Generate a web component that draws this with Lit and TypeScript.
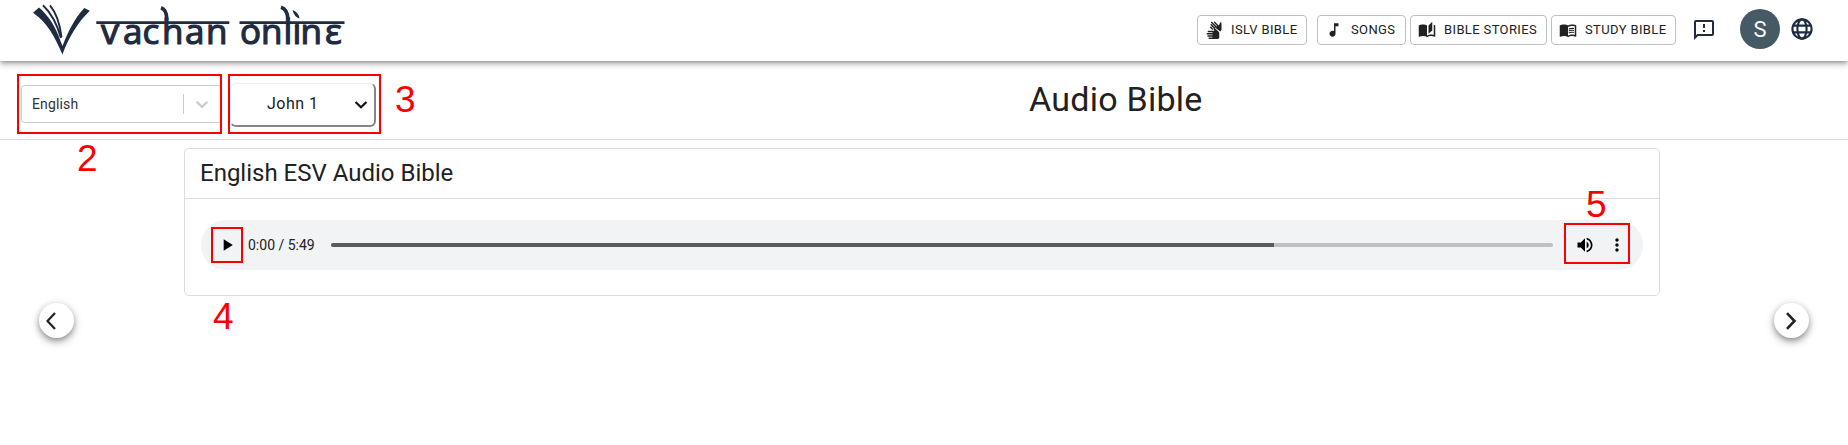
import { LitElement, html, css, svg } from "lit";
import { customElement } from "lit/decorators.js";

const hands = svg`<path d="M12.49 13l-.93-1.86c-.37-.74-.07-1.64.67-2.01l.26-.13 5.73 5.46c.5.47.78 1.13.78 1.81v5.23c0 1.38-1.12 2.5-2.5 2.5h-11c-.55 0-1-.45-1-1s.45-1 1-1H10v-1H4c-.55 0-1-.45-1-1s.45-1 1-1h6v-1H3c-.55 0-1-.45-1-1s.45-1 1-1h7v-1H4.500c-.55 0-1-.45-1-1s.45-1 1-1h7.990z"/><path d="M7.600 8.300L9.800 10.600M8.200 4.900L12.600 9.400M8.900 1.900L15.200 8.400M12.700 1.600L18 7.200" fill="none" stroke="#212121" stroke-width="1.900" stroke-linecap="round"/><path d="M13.400 8.600L18.300 5.600L19.240 4.730L19.830 2.740C20.070 2 20.840 1.610 21.570 1.830L22 3.350V11.260C22 11.950 21.710 12.610 21.210 13.080L20.330 13.910z"/>`;
const note = svg`<path d="M12 3v10.55c-.59-.34-1.27-.55-2-.55-2.21 0-4 1.79-4 4s1.79 4 4 4 4-1.79 4-4V7h4V3h-6z"/>`;
const stories = svg`<path d="M19 1l-5 5v11l5-4.5V1zM1 6v14.65c0 .25.25.5.5.5.1 0 .15-.05.25-.05C3.1 20.45 5.05 20 6.5 20c1.95 0 4.05.4 5.5 1.5V6c-1.45-1.1-3.55-1.5-5.5-1.5S2.45 4.9 1 6zm22 13.5V6c-.6-.45-1.25-.75-2-1v13.5c-1.1-.35-2.3-.5-3.5-.5-1.7 0-4.15.65-5.5 1.5v2c1.35-.85 3.8-1.5 5.5-1.5 1.65 0 3.35.3 4.75 1.05.1.05.15.05.25.05.25 0 .5-.25.5-.5v-1.1z"/>`;
const study = svg`<path d="M21 5c-1.11-.35-2.33-.5-3.5-.5-1.95 0-4.05.4-5.5 1.5-1.45-1.1-3.55-1.5-5.5-1.5S2.45 4.9 1 6v14.65c0 .25.25.5.5.5.1 0 .15-.05.25-.05C3.1 20.45 5.05 20 6.5 20c1.95 0 4.05.4 5.5 1.5 1.35-.85 3.8-1.5 5.5-1.5 1.65 0 3.35.3 4.75 1.05.1.05.15.05.25.05.25 0 .5-.25.5-.5V6c-.6-.45-1.25-.75-2-1zm0 13.5c-1.1-.35-2.3-.5-3.5-.5-1.7 0-4.15.65-5.5 1.5V8c1.35-.85 3.8-1.5 5.5-1.5 1.2 0 2.4.15 3.5.5v11.5z"/><path d="M17.5 10.5c.88 0 1.73.09 2.5.26V9.24c-.79-.15-1.64-.24-2.5-.24-1.7 0-3.24.29-4.5.83v1.66c1.13-.64 2.7-.99 4.5-.99zM13 12.49v1.66c1.13-.64 2.7-.99 4.5-.99.88 0 1.73.09 2.5.26V11.9c-.79-.15-1.64-.24-2.5-.24-1.7 0-3.24.3-4.5.83zM17.5 14.33c-1.7 0-3.24.29-4.5.83v1.66c1.13-.64 2.7-.99 4.5-.99.88 0 1.73.09 2.5.26v-1.52c-.79-.16-1.64-.24-2.5-.24z"/>`;

const links = [
  { label: "ISLV BIBLE", icon: hands, cls: "link islv" },
  { label: "SONGS", icon: note, cls: "link songs" },
  { label: "BIBLE STORIES", icon: stories, cls: "link stories" },
  { label: "STUDY BIBLE", icon: study, cls: "link study" },
];

@customElement("app-root")
export class AppRoot extends LitElement {
  static styles = css`
    :host { display: block; position: relative; height: 445px; overflow: hidden; background: #fff; color: #212121; font-family: Roboto, sans-serif; }
    * { box-sizing: border-box; }
    svg { display: block; flex: none; }
    .bar { height: 61px; display: flex; align-items: flex-start; background: #fff; position: relative;
      box-shadow: 0 2px 4px -1px rgba(0,0,0,.3), 0 4px 5px 0 rgba(0,0,0,.14), 0 1px 10px 0 rgba(0,0,0,.12); }
    .logo { margin-left: 20px; }
    .word { font-family: "Open Sans", sans-serif; font-size: 35px; fill: #1f2b40; stroke: #1f2b40; stroke-width: 1.2; }
    .ink { fill: #1f2b40; }
    .links { margin-left: auto; margin-top: 15px; display: flex; }
    .link { height: 30px; display: flex; align-items: center; gap: 8px; padding: 0 0 1px 7px; border: 1px solid #c0c0c0; border-radius: 4px; font-size: 13px; letter-spacing: .37px; white-space: nowrap; }
    .link svg { fill: #212121; }
    .islv { width: 110px; margin-right: 10px; }
    .songs { width: 89px; margin-right: 4px; }
    .stories { width: 137px; margin-right: 4px; }
    .study { width: 125px; }
    .feedback { margin: 18px 24px 0 16px; fill: #1f2b40; }
    .avatar { width: 40px; height: 40px; margin-top: 9px; border-radius: 50%; background: #455a64; color: #fafafa; font-size: 22px; display: flex; align-items: center; justify-content: center; }
    .globe { margin: 17px 34px 0 10px; }
    .sub { height: 79px; border-bottom: 1px solid #dcdcdc; display: flex; padding-left: 21px; }
    .lang { width: 201px; height: 38px; margin-top: 24px; border: 1px solid #ccc; border-radius: 4px; display: flex; align-items: center; padding-left: 10px; font-size: 14px; letter-spacing: .14px; color: #333; }
    .sep { width: 1px; height: 20px; background: #ccc; margin-left: auto; margin-right: 8px; }
    .lang svg { margin-right: 9px; }
    .book { width: 146px; height: 44px; margin: 22px 0 0 8px; border-radius: 6px; border: 1px solid #eee; border-color: #eee #858585 #858585 #eee; border-width: 1px 2px 2px 1px; display: flex; align-items: center; padding: 0 6px 2px 36px; font-size: 16px; letter-spacing: .5px; justify-content: space-between; }
    .title { margin: 17px 0 0 653px; font-size: 34px; line-height: 42px; letter-spacing: .25px; font-weight: 400; }
    .card { width: 1476px; height: 148px; margin: 8px 0 0 184px; border: 1px solid #dcdcdc; border-radius: 5px; }
    .head { height: 50px; border-bottom: 1px solid #dcdcdc; padding-left: 15px; font-size: 24px; line-height: 48px; }
    .audio { height: 50px; margin: 21px 16px 0; border-radius: 25px; background: #f1f3f4; display: flex; align-items: center; padding-left: 16px; }
    .time { width: 83px; margin-left: 11px; font-size: 14px; color: #202124; white-space: nowrap; }
    .track { width: 1222px; height: 4px; border-radius: 2px; background: #c1c1c1; display: flex; overflow: hidden; }
    .loaded { width: 943px; background: #5a5a5a; }
    .vol { margin-left: 22px; }
    .dots { margin-left: 12px; }
    .navs { display: flex; justify-content: space-between; margin: 7px 39px 0; }
    .nav { width: 35px; height: 35px; border-radius: 50%; background: #fff; display: flex; align-items: center; justify-content: center; box-shadow: 0 3px 6px -1px rgba(0,0,0,.3), 0 4px 10px 0 rgba(0,0,0,.22), 0 0 8px rgba(0,0,0,.08); }
    .prev { padding-right: 11px; }
    .next { padding-right: 1px; }
    .box { position: absolute; border: 2px solid #fb0000; }
    .num { position: absolute; font: 37px/36px "Liberation Sans", sans-serif; color: #fb0000; }
    .b2 { left: 17px; top: 74px; width: 205px; height: 60px; }
    .b3 { left: 228px; top: 74px; width: 153px; height: 60px; }
    .b4 { left: 211px; top: 227px; width: 32px; height: 36px; }
    .b5 { left: 1564px; top: 223px; width: 66px; height: 41px; }
    .n2 { left: 77px; top: 141px; }
    .n3 { left: 395px; top: 82px; }
    .n4 { left: 213px; top: 299px; }
    .n5 { left: 1586px; top: 187px; }
  `;

  render() {
    return html`
      <header class="bar">
        <svg class="logo" width="340" height="60" viewBox="20 0 340 60">
          <path class="ink" d="M33 12.700L39 7.500C48 15 56 27 60.500 41L62.500 46C68 32 74 19 84.300 8L89.800 10.800C78 22 69 37 62.400 54.500C55 37 47 22 33 12.700z"/>
          <path d="M43 5.300C50 12 57 24 61 38M50 5.300C55.500 12 60 24 61.500 37" stroke="#1f2b40" stroke-width="1.900" fill="none"/>
          <path class="ink" d="M96.300 21.200h133v2.900h-133zM239.500 21.200h105v2.900h-105z"/>
          <text class="word" x="101 123 142.500 162 185 206" y="44">vachan</text>
          <text class="word" x="240 261 283.500 292.500 300.500 325" y="44">onlınε</text>
          <path class="ink" d="M292.500 10q6 2 7 8.500q-5-1-7-8.500z"/>
          <path d="M161 7.700q6 2 5.700 12M281 7.200q6.500 2 7 12" stroke="#1f2b40" stroke-width="3.600" fill="none"/>
          <path d="M118 23v3.500M252 23v3.500M297 23v4" stroke="#1f2b40" stroke-width="3"/>
        </svg>
        <nav class="links">
          ${links.map((l) => html`<div class=${l.cls}><svg width="18" height="18" viewBox="0 0 24 24">${l.icon}</svg><span>${l.label}</span></div>`)}
        </nav>
        <svg class="feedback" width="24" height="24" viewBox="0 0 24 24"><path d="M20 2H4c-1.1 0-1.99.9-1.99 2L2 22l4-4h14c1.1 0 2-.9 2-2V4c0-1.1-.9-2-2-2zm0 14H5.17L4 17.17V4h16v12zm-9-4h2v2h-2zm0-6h2v4h-2z"/></svg>
        <div class="avatar">S</div>
        <svg class="globe" width="24" height="24" viewBox="0 0 24 24" fill="none" stroke="#1f2b40" stroke-width="2.100"><circle cx="12" cy="12" r="9.600"/><ellipse cx="12" cy="12" rx="4.600" ry="9.600"/><path d="M3.200 8.600h17.600M3.200 15.400h17.600"/></svg>
      </header>
      <section class="sub">
        <div class="lang"><span>English</span><i class="sep"></i>
          <svg width="20" height="20" viewBox="0 0 20 20" fill="#ccc"><path d="M4.516 7.548c.436-.446 1.043-.481 1.576 0L10 11.295l3.908-3.747c.533-.481 1.141-.446 1.574 0 .436.445.408 1.197 0 1.615-.406.418-4.695 4.502-4.695 4.502a1.095 1.095 0 0 1-1.576 0S4.924 9.581 4.516 9.163s-.436-1.17 0-1.615z"/></svg>
        </div>
        <div class="book"><span>John 1</span>
          <svg width="14" height="14" viewBox="0 0 14 14" fill="none" stroke="#111" stroke-width="2.200"><path d="M1.500 5L7 10.300L12.500 5"/></svg>
        </div>
        <h1 class="title">Audio Bible</h1>
      </section>
      <main class="card">
        <div class="head">English ESV Audio Bible</div>
        <div class="audio">
          <svg width="20" height="20" viewBox="0 0 24 24"><path d="M8 5v14l11-7z"/></svg>
          <span class="time">0:00 / 5:49</span>
          <div class="track"><div class="loaded"></div></div>
          <svg class="vol" width="20" height="20" viewBox="0 0 24 24"><path d="M3 9v6h4l5 5V4L7 9H3zm13.500 3c0-1.770-1.020-3.290-2.500-4.030v8.050c1.480-.730 2.500-2.250 2.500-4.020zM14 3.230v2.060c2.890.860 5 3.540 5 6.710s-2.110 5.850-5 6.710v2.060c4.010-.910 7-4.490 7-8.770s-2.990-7.860-7-8.770z"/></svg>
          <svg class="dots" width="20" height="20" viewBox="0 0 24 24"><path d="M12 8c1.100 0 2-.900 2-2s-.900-2-2-2-2 .900-2 2 .900 2 2 2zm0 2c-1.100 0-2 .900-2 2s.900 2 2 2 2-.900 2-2-.900-2-2-2zm0 6c-1.100 0-2 .900-2 2s.900 2 2 2 2-.900 2-2-.900-2-2-2z"/></svg>
        </div>
      </main>
      <div class="navs">
        <div class="nav prev"><svg width="10" height="18" viewBox="0 0 10 18" fill="none" stroke="#212121" stroke-width="2.200"><path d="M9 1L1.500 9L9 17"/></svg></div>
        <div class="nav next"><svg width="10" height="18" viewBox="0 0 10 18" fill="none" stroke="#212121" stroke-width="2.600"><path d="M1 1.200L8.500 9L1 16.800"/></svg></div>
      </div>
      <div class="box b2"></div><div class="box b3"></div><div class="box b4"></div><div class="box b5"></div>
      <div class="num n2">2</div><div class="num n3">3</div><div class="num n4">4</div><div class="num n5">5</div>
    `;
  }
}
